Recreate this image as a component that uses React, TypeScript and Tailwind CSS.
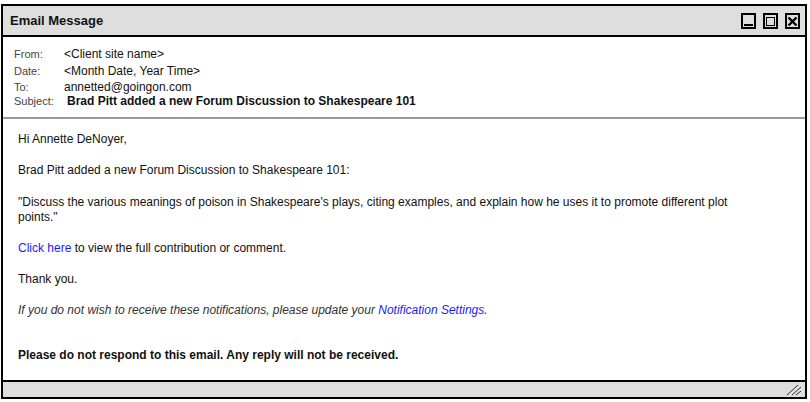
import React from 'react';

function WinButton({ children }: { children: React.ReactNode }) {
  return (
    <div className="w-[15px] h-[16px] border-2 border-black bg-[#dedede] flex items-center justify-center">
      {children}
    </div>
  );
}

export default function App() {
  return (
    <div
      className="w-[810px] h-[402px] bg-white pt-[4px] pl-[1px]"
      style={{ fontFamily: '"Liberation Sans", Arial, sans-serif' }}
    >
      <div className="w-[806px] h-[395px] border-2 border-black flex flex-col">
        {/* Title bar */}
        <div className="h-[31px] bg-[#dedede] border-b-2 border-black flex items-center justify-between pl-[7px] pr-[5px]">
          <span className="text-[13px] font-bold text-[#111]">Email Message</span>
          <div className="flex gap-[7px] pt-[1px]">
            <WinButton>
              <div className="w-[9px] h-[2px] bg-black mt-[8px]" />
            </WinButton>
            <WinButton>
              <div className="w-[9px] h-[9px] border border-black" />
            </WinButton>
            <WinButton>
              <svg width="11" height="11" viewBox="0 0 11 11">
                <path d="M1.5 1.5 L9.5 9.5 M9.5 1.5 L1.5 9.5" stroke="black" strokeWidth="2.4" />
              </svg>
            </WinButton>
          </div>
        </div>

        {/* Header */}
        <div className="pl-[11px] pt-[8px] pb-[10px] border-b-2 border-[#9a9a9a] text-[#111]">
          <div className="flex items-baseline h-[17px]">
            <span className="w-[50px] text-[11px] text-[#444]">From:</span>
            <span className="text-[12px]">&lt;Client site name&gt;</span>
          </div>
          <div className="flex items-baseline h-[16px]">
            <span className="w-[50px] text-[11px] text-[#444]">Date:</span>
            <span className="text-[12px]">&lt;Month Date, Year Time&gt;</span>
          </div>
          <div className="flex items-baseline h-[14px]">
            <span className="w-[50px] text-[11px] text-[#444]">To:</span>
            <span className="text-[12px]">annetted@goingon.com</span>
          </div>
          <div className="flex items-baseline h-[15px]">
            <span className="w-[53px] text-[11px] text-[#444]">Subject:</span>
            <span className="text-[12px] font-bold">Brad Pitt added a new Forum Discussion to Shakespeare 101</span>
          </div>
        </div>

        {/* Body */}
        <div className="flex-1 pl-[15px] pr-[45px] pt-[13px] text-[12px] leading-[15px] text-[#111] flex flex-col">
          <p>Hi Annette DeNoyer,</p>
          <p className="mt-[16px]">Brad Pitt added a new Forum Discussion to Shakespeare 101:</p>
          <p className="mt-[17px]">
            "Discuss the various meanings of poison in Shakespeare's plays, citing examples, and explain how he uses it to promote different plot points."
          </p>
          <p className="mt-[16px]">
            <span className="text-[#1a1aff]">Click here</span> to view the full contribution or comment.
          </p>
          <p className="mt-[16px]">Thank you.</p>
          <p className="mt-[16px] italic text-[#333]">
            If you do not wish to receive these notifications, please update your{' '}
            <span className="text-[#1a1aff]">Notification Settings</span>.
          </p>
          <p className="mt-[30px] font-bold">Please do not respond to this email. Any reply will not be received.</p>
        </div>

        {/* Footer */}
        <div className="h-[17px] bg-[#dedede] border-t-2 border-black flex justify-end items-end pr-[3px] pb-[1px]">
          <svg width="16" height="12" viewBox="0 0 16 12">
            <path d="M1 11 L12 1 M6 11 L15 3 M10 11 L15 7" stroke="#333" strokeWidth="1" />
          </svg>
        </div>
      </div>
    </div>
  );
}
